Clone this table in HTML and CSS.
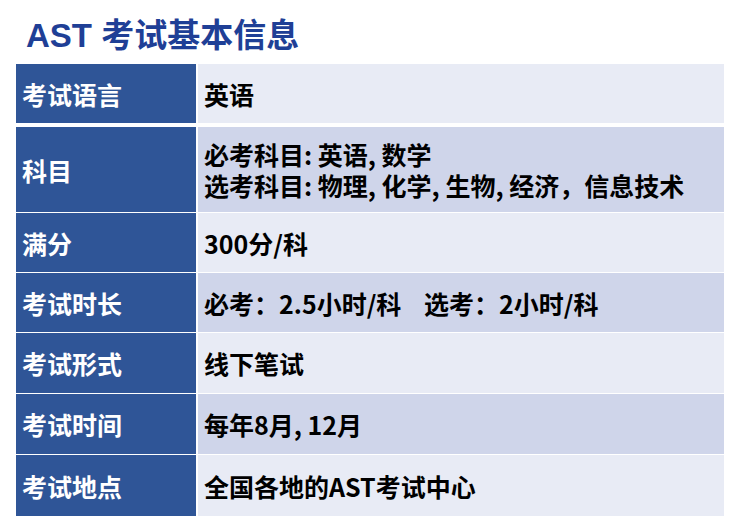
FILE: index.html
```html
<!DOCTYPE html>
<html lang="zh">
<head>
<meta charset="utf-8">
<link rel="stylesheet" href="styles.css">
</head>
<body>
<div class="page">
  <h1 class="title">AST 考试基本信息</h1>
  <div class="table">
    <div class="row odd first">
      <div class="head">考试语言</div>
      <div class="cell">英语</div>
    </div>
    <div class="row even tall">
      <div class="head">科目</div>
      <div class="cell multi">
        <div>必考科目: 英语, 数学</div>
        <div>选考科目: 物理, 化学, 生物, 经济，信息技术</div>
      </div>
    </div>
    <div class="row odd">
      <div class="head">满分</div>
      <div class="cell">300分/科</div>
    </div>
    <div class="row even">
      <div class="head">考试时长</div>
      <div class="cell">必考：2.5小时/科&nbsp;&nbsp;&nbsp;&nbsp;选考：2小时/科</div>
    </div>
    <div class="row odd r60">
      <div class="head">考试形式</div>
      <div class="cell">线下笔试</div>
    </div>
    <div class="row even r60">
      <div class="head">考试时间</div>
      <div class="cell">每年8月, 12月</div>
    </div>
    <div class="row odd r61">
      <div class="head">考试地点</div>
      <div class="cell">全国各地的AST考试中心</div>
    </div>
  </div>
</div>
</body>
</html>
```
FILE: styles.css
```css
html, body {
  margin: 0;
  padding: 0;
  background: #ffffff;
}
body {
  font-family: "Noto Sans CJK SC", "Noto Sans", sans-serif;
}
.page {
  width: 708px;
  padding: 0 0 0 16px;
}
.title {
  margin: 0;
  height: 64px;
  box-sizing: border-box;
  padding: 16px 0 0 10px;
  font-family: "Liberation Sans", "Noto Sans CJK SC", sans-serif;
  font-size: 33px;
  line-height: 40px;
  font-weight: bold;
  color: #1F3F96;
}
.table {
  display: flex;
  flex-direction: column;
  gap: 1px;
}
.row {
  display: flex;
  gap: 2px;
  height: 59px;
}
.row.first {
  margin-bottom: 3px;
}
.row.tall {
  height: 85px;
}
.row.r60 {
  height: 60px;
}
.row.r61 {
  height: 61px;
}
.head {
  width: 180px;
  flex: none;
  background: #2F5597;
  color: #ffffff;
  font-weight: bold;
  font-size: 25px;
  line-height: 30px;
  display: flex;
  align-items: center;
  padding-left: 6px;
  box-sizing: border-box;
}
.cell {
  flex: 1;
  font-weight: bold;
  font-size: 25px;
  line-height: 30px;
  color: #000000;
  display: flex;
  align-items: center;
  padding-left: 6px;
}
.cell.multi {
  flex-direction: column;
  align-items: flex-start;
  justify-content: center;
  line-height: 31px;
}
.odd .cell {
  background: #E8EBF5;
}
.even .cell {
  background: #CFD5EA;
}
```
